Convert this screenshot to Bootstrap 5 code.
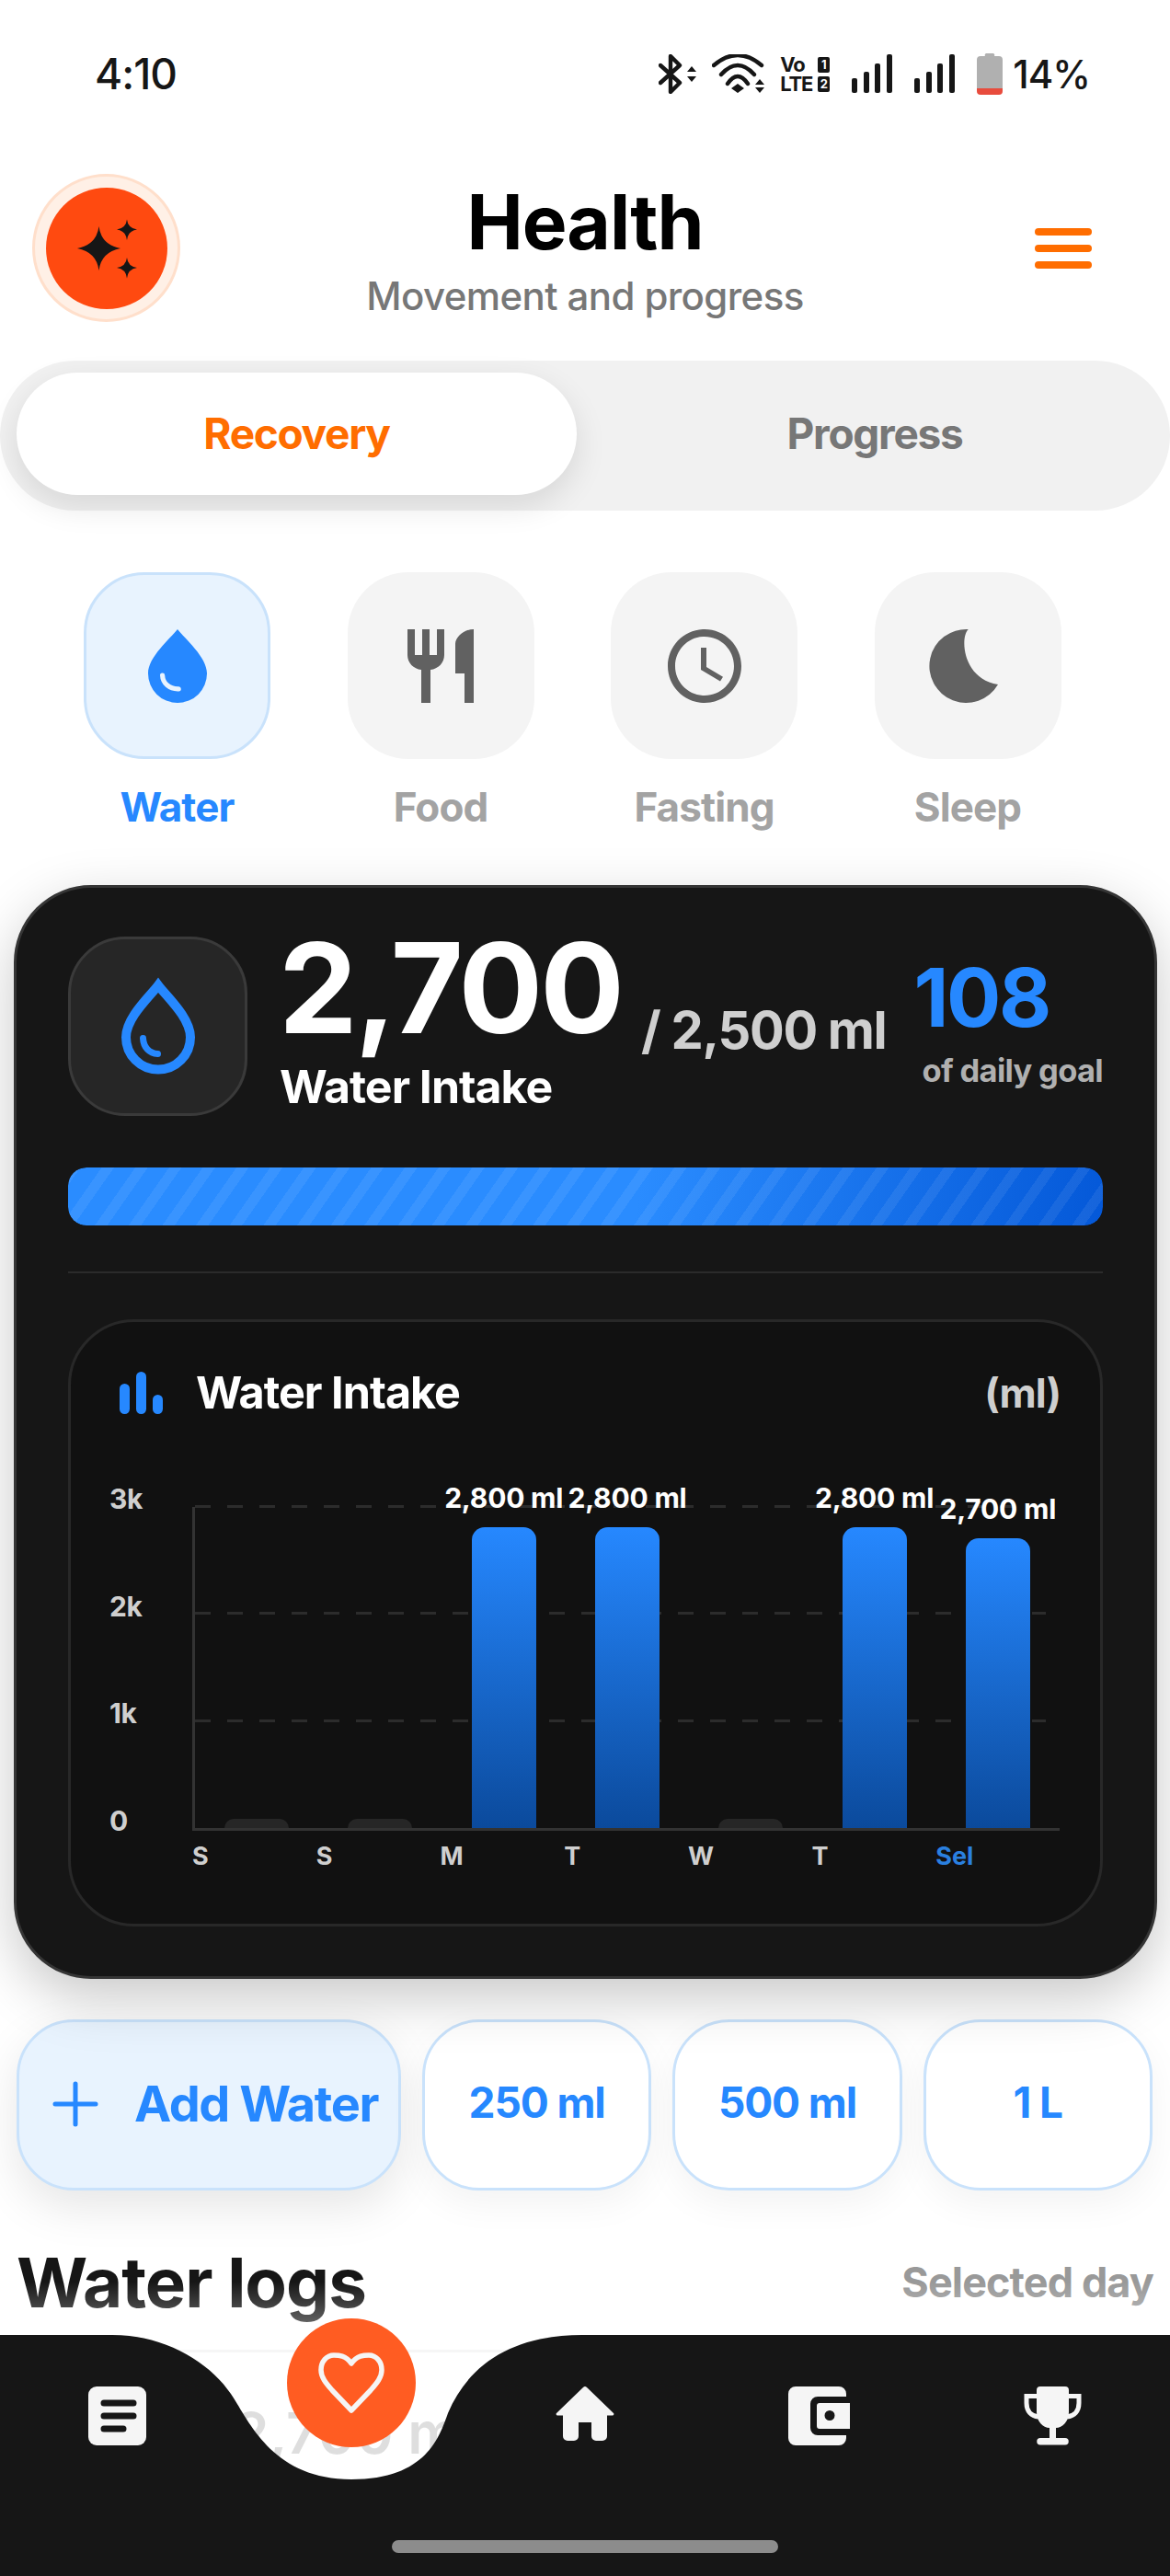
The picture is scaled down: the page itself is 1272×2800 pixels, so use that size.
<!DOCTYPE html>
<html lang="en">
  <head>
    <meta charset="UTF-8" />
    <meta name="viewport" content="width=device-width, initial-scale=1.0" />
    <title>Health</title>
    <link
      href="https://cdn.jsdelivr.net/npm/bootstrap@5.3.0/dist/css/bootstrap.min.css"
      rel="stylesheet"
    />
    <style>
      :root { --blue: #2688ff; --ink: #161616; --orange: #ff6d00; }
      html, body { margin: 0; }
      body { width: 1272px; height: 2800px; overflow: hidden; position: relative; background: #fff; font-family: Inter, "Liberation Sans", sans-serif; color: var(--ink); }

      .status-row { height: 45px; margin-top: 58px; padding: 0 87px 0 103px; }
      .status-time { font-size: 46px; font-weight: 500; line-height: 45px; letter-spacing: -1px; }
      .status-pct { font-size: 42px; font-weight: 500; line-height: 45px; letter-spacing: -1px; margin-left: 11px; }
      .lte-box { width: 54px; line-height: 21px; font-weight: 700; font-size: 22px; letter-spacing: -1.200px; }
      .sim-num { background: var(--ink); color: #fff; border-radius: 2px; width: 13px; height: 17px; font-size: 13px; line-height: 17px; text-align: center; letter-spacing: 0; }

      .top-bar { margin-top: 86px; height: 161px; padding-left: 35px; }
      .logo-ring { width: 161px; height: 161px; border-radius: 50%; background: #fff0e6; border: 3px solid #ffdfcb; }
      .logo-disc { width: 132px; height: 132px; border-radius: 50%; background: #ff4a10; }
      .top-side { width: 161px; }
      .top-side-end { margin-right: 35px; padding-right: 50px; }
      .top-text { padding-top: 10px; }
      .page-title { font-size: 82px; font-weight: 700; line-height: 90px; color: #000; margin: -2px 0 0; letter-spacing: -1px; }
      .page-sub { font-size: 42px; font-weight: 500; line-height: 56px; color: #777; margin: 7px 0 0; letter-spacing: -.6px; }
      .burger { width: 62px; gap: 10px; }
      .burger span { display: block; height: 8px; background: var(--orange); border-radius: 4px; }

      .seg-wrap { margin-top: 42px; height: 163px; background: #f1f1f1; border-radius: 82px; padding: 13px 18px; }
      .seg-item { flex: 1; height: 133px; border-radius: 67px; font-size: 46px; font-weight: 700; color: #777; letter-spacing: -1.300px; }
      .seg-item.is-on { flex: 0 0 609px; background: #fff; color: var(--orange); box-shadow: 0 12px 34px rgba(0,0,0,.11); }
      .seg-rest { padding-left: 21px; }

      .cat-row { margin-top: 67px; padding-left: 91px; gap: 83.500px; }
      .cat-col { width: 203px; }
      .cat-tile { width: 203px; height: 203px; border-radius: 66px; background: #f4f4f4; }
      .cat-tile.is-on { background: #e8f3fe; border: 3px solid #c9e2fb; }
      .cat-label { font-size: 44px; font-weight: 700; line-height: 50px; margin-top: 27px; color: #a3a3a3; letter-spacing: -.9px; }
      .cat-label.is-on { color: var(--blue); }

      .water-card { margin: 60px 14px 0 15px; height: 1189px; background: var(--ink); border: 3px solid #353535; border-radius: 84px; padding: 53px 56px 0; box-shadow: 0 20px 60px rgba(0,0,0,.22); color: #fff; }
      .drop-tile { width: 195px; height: 195px; flex: none; border-radius: 62px; background: #262626; border: 3px solid #3a3a3a; }
      .stat-main { margin-left: 34px; }
      .stat-big { font-size: 136px; font-weight: 700; line-height: 112px; letter-spacing: -3px; color: #fff; }
      .stat-of { font-size: 56px; font-weight: 700; line-height: 70px; color: #cfcfcf; margin: 0 0 -25px 21px; letter-spacing: -1.300px; white-space: nowrap; }
      .stat-name { font-size: 50px; font-weight: 700; line-height: 60px; margin: 21px 0 0 1px; letter-spacing: -1px; }
      .stat-side { margin-left: auto; padding-top: 21px; }
      .stat-pct { font-size: 88px; font-weight: 700; line-height: 90px; color: var(--blue); letter-spacing: -2.500px; margin-left: -4px; }
      .stat-pct-sub { font-size: 34.500px; font-weight: 700; line-height: 44px; color: #b0b0b0; margin-top: 13px; margin-left: 5px; white-space: nowrap; letter-spacing: -.7px; }
      .water-bar { margin-top: 56px; height: 63px; border-radius: 20px; background-color: transparent; }
      .water-fill { width: 100%; border-radius: 20px; background: repeating-linear-gradient(125deg, rgba(255,255,255,.07) 0 11px, rgba(255,255,255,0) 11px 30px), linear-gradient(100deg, #2a8cff 0%, #2a8cff 55%, #0458d8 100%); }
      .card-rule { margin: 50px 0; border: 0; height: 2px; background: #2b2b2b; opacity: 1; }

      .chart-panel { height: 660px; background: #111; border: 3px solid #282828; border-radius: 72px; padding: 47px 43px 0 53px; }
      .chart-head { height: 60px; }
      .chart-title { font-size: 48.500px; font-weight: 700; letter-spacing: -1px; margin-left: 36px; }
      .chart-unit { font-size: 44px; font-weight: 700; color: #cfcfcf; letter-spacing: -1px; }
      .chart-body { margin-top: 94px; margin-left: -11px; }
      .y-col { width: 90px; height: 386px; margin-top: -27px; flex: none; }
      .y-col span { font-size: 30px; font-weight: 700; line-height: 36px; color: #cfcfcf; letter-spacing: -.4px; }
      .plot { position: relative; width: 943px; height: 352px; border-left: 3px solid #333; border-bottom: 3px solid #333; }
      .grid-line { position: absolute; left: 0; width: 925px; height: 3px; background: repeating-linear-gradient(90deg, #2c2c2c 0 17px, transparent 17px 35px); }
      .plot-slot { position: relative; flex: 1 1 0; min-width: 0; height: 100%; }
      .bar-value { flex: none; font-size: 30px; font-weight: 700; line-height: 36px; color: #fff; margin-bottom: 14px; white-space: nowrap; letter-spacing: -.2px; }
      .bar-fill { flex: none; width: 70px; border-radius: 14px 14px 0 0; background: linear-gradient(180deg, #2688ff 0%, #0b4a9c 100%); }
      .bar-empty { flex: none; width: 70px; border-radius: 14px 14px 0 0; background: #262626; }
      .x-row { margin-left: 90px; width: 943px; margin-top: 3px; }
      .x-row span { flex: 1 1 0; font-size: 27px; font-weight: 700; line-height: 36px; color: #cfcfcf; }
      .x-row span.is-on { color: #2a80e0; }

      .quick-row { margin-top: 44px; padding: 0 19px 0 18px; gap: 23px; }
      .quick-btn { height: 186px; flex: 1 1 0; border-radius: 62px; background: #fff; border: 3px solid #c9e2fb; color: var(--blue); font-size: 46px; font-weight: 700; letter-spacing: -1.100px; box-shadow: 0 14px 40px rgba(0,0,0,.05); padding: 0 0 6px; }
      .quick-btn.is-main { flex: 0 0 418px; background: #e8f3fe; font-size: 54px; box-shadow: 0 18px 50px rgba(0,0,0,.1); padding: 0 0 3px 36px; gap: 39px; white-space: nowrap; letter-spacing: -1.400px; }

      .logs-head { margin-top: 55px; padding: 0 18px; height: 90px; }
      .logs-title { font-size: 74.500px; font-weight: 700; line-height: 90px; margin: 0; letter-spacing: -1px; }
      .logs-note { font-size: 45px; font-weight: 700; color: #999; letter-spacing: -.9px; }
      .log-row { margin-top: 28px; border-top: 3px solid #ececec; padding: 48px 0 0 254px; font-size: 62px; font-weight: 600; line-height: 80px; color: var(--ink); }

      .fade-veil { position: absolute; left: 0; right: 0; top: 2480px; height: 200px; background: linear-gradient(180deg, rgba(255,255,255,0) 0%, rgba(255,255,255,.86) 60%, rgba(255,255,255,.86) 100%); }
      .tab-bar { position: absolute; left: 0; right: 0; bottom: 0; height: 262px; }
      .tab-shape { position: absolute; left: 0; top: 0; }
      .tab-items { position: relative; padding-top: 56px; }
      .tab-cell { flex: 1 1 0; }
      .tab-fab { width: 140px; height: 140px; border-radius: 50%; background: #ff5c22; margin-top: -74px; }
      .home-pill { position: absolute; left: 426px; bottom: 25px; width: 420px; height: 14px; border-radius: 7px; background: #8c8c8c; }
    </style>
  </head>
  <body>
    <div class="status-row d-flex align-items-center justify-content-between">
      <div class="status-time">4:10</div>
      <div class="d-flex align-items-center">
        <svg width="42" height="43" viewBox="0 0 42 43" fill="none" stroke="#161616" stroke-width="4.400" stroke-linejoin="round" stroke-linecap="round"><path d="M2 12l21 19-10 10V2l10 10L2 31"/><path d="M36 13l5 6H31zM31 24h10l-5 6z" fill="#161616" stroke="none"/></svg>
        <svg class="ms-3" width="58" height="43" viewBox="0 0 58 43" fill="none" stroke="#161616" stroke-width="4.400" stroke-linecap="round"><path d="M2 12Q28-10 54 12M10 22Q28 2 46 22M17 32Q28 16 39 32"/><path d="M28 32l7 5-7 5-7-5zM52 27l5 6H47zM47 36h10l-5 6z" fill="#161616" stroke="none"/></svg>
        <div class="lte-box ms-3">
          <div class="d-flex justify-content-between align-items-center"><span>Vo</span><span class="sim-num">1</span></div>
          <div class="d-flex justify-content-between align-items-center"><span>LTE</span><span class="sim-num">2</span></div>
        </div>
        <svg class="ms-4" width="44" height="43" viewBox="0 0 44 43" fill="#161616"><rect x="0" y="26" width="6" height="16" rx="2"/><rect x="13" y="19" width="6" height="23" rx="2"/><rect x="25" y="10" width="6" height="32" rx="2"/><rect x="38" y="0" width="6" height="42" rx="2"/></svg>
        <svg class="ms-4" width="44" height="43" viewBox="0 0 44 43" fill="#161616"><rect x="0" y="26" width="6" height="16" rx="2"/><rect x="13" y="19" width="6" height="23" rx="2"/><rect x="25" y="10" width="6" height="32" rx="2"/><rect x="38" y="0" width="6" height="42" rx="2"/></svg>
        <svg class="ms-4" width="28" height="45" viewBox="0 0 28 45"><path d="M9 3a2 2 0 0 1 2-3h6a2 2 0 0 1 2 3h5a4 4 0 0 1 4 4v31H0V7a4 4 0 0 1 4-4z" fill="#b0b0b0"/><path d="M0 38h28v3a4 4 0 0 1-4 4H4a4 4 0 0 1-4-4z" fill="#e84c3d"/></svg>
        <div class="status-pct">14%</div>
      </div>
    </div>

    <div class="top-bar d-flex align-items-center justify-content-between">
      <div class="top-side">
        <div class="logo-ring d-flex align-items-center justify-content-center">
          <div class="logo-disc d-flex">
            <svg width="132" height="132" viewBox="0 0 132 132" fill="#161616"><path d="M57.500 42Q60 62 81 66 60 70 57.500 90 55 70 34 66 55 62 57.500 42z"/><path d="M88 34.500Q89 44 99 45.500 89 47 88 57 87 47 77 45.500 87 44 88 34.500z"/><path d="M88 76Q89 85.500 99 87 89 88.500 88 98.500 87 88.500 77 87 87 85.500 88 76z"/></svg>
          </div>
        </div>
      </div>
      <div class="top-text text-center">
        <h1 class="page-title">Health</h1>
        <p class="page-sub">Movement and progress</p>
      </div>
      <div class="top-side top-side-end d-flex justify-content-end">
        <div class="burger d-flex flex-column"><span></span><span></span><span></span></div>
      </div>
    </div>

    <div class="seg-wrap d-flex">
      <div class="seg-item is-on d-flex align-items-center justify-content-center">Recovery</div>
      <div class="seg-item seg-rest d-flex align-items-center justify-content-center">Progress</div>
    </div>

    <div class="cat-row d-flex">
      <div class="cat-col text-center">
        <div class="cat-tile is-on d-flex align-items-center justify-content-center">
          <svg width="96" height="96" viewBox="0 0 24 24"><path d="M12 2C10 4.600 4 9.500 4 14a8 8 0 0 0 16 0c0-4.500-6-9.400-8-12z" fill="#2688ff"/><path d="M7.900 14.500c.1 2.200 1.900 3.800 4.400 3.700" fill="none" stroke="#e8f3fe" stroke-width="1.300" stroke-linecap="round"/></svg>
        </div>
        <div class="cat-label is-on">Water</div>
      </div>
      <div class="cat-col text-center">
        <div class="cat-tile d-flex align-items-center justify-content-center">
          <svg width="96" height="96" viewBox="0 0 24 24" fill="#616161"><path d="M11 9H9V2H7v7H5V2H3v7c0 2.120 1.660 3.840 3.750 3.970V22h2.500v-9.030C11.340 12.840 13 11.120 13 9V2h-2v7zm5-3v8h2.500v8H21V2c-2.760 0-5 2.240-5 4z"/></svg>
        </div>
        <div class="cat-label">Food</div>
      </div>
      <div class="cat-col text-center">
        <div class="cat-tile d-flex align-items-center justify-content-center">
          <svg width="96" height="96" viewBox="0 0 24 24" fill="#616161"><path d="M11.990 2C6.470 2 2 6.480 2 12s4.470 10 9.990 10C17.520 22 22 17.520 22 12S17.520 2 11.990 2zM12 20c-4.420 0-8-3.580-8-8s3.580-8 8-8 8 3.580 8 8-3.580 8-8 8z"/><path d="M12.500 7H11v6l5.250 3.150.75-1.230-4.500-2.670z"/></svg>
        </div>
        <div class="cat-label">Fasting</div>
      </div>
      <div class="cat-col text-center">
        <div class="cat-tile d-flex align-items-center justify-content-center">
          <svg width="96" height="96" viewBox="0 0 24 24" fill="#616161"><path d="M12.200 2C9.900 4 10.500 15.500 20.250 17A10 10 0 1 1 12.200 2z"/></svg>
        </div>
        <div class="cat-label">Sleep</div>
      </div>
    </div>

    <div class="water-card card">
      <div class="d-flex">
        <div class="drop-tile d-flex align-items-center justify-content-center">
          <svg width="120" height="120" viewBox="0 0 24 24" fill="none" stroke="#2688ff" stroke-linecap="round"><path d="M12 3C10.300 5.300 5 10 5 14.300a7 7 0 0 0 14 0C19 10 13.700 5.300 12 3z" stroke-width="2"/><path d="M8.700 14.500c.1 1.900 1.300 3.300 3.200 3.400" stroke-width="1.400"/></svg>
        </div>
        <div class="stat-main">
          <div class="d-flex align-items-end">
            <div class="stat-big">2,700</div>
            <div class="stat-of">/ 2,500 ml</div>
          </div>
          <div class="stat-name">Water Intake</div>
        </div>
        <div class="stat-side">
          <div class="stat-pct">108</div>
          <div class="stat-pct-sub">of daily goal</div>
        </div>
      </div>

      <div class="progress water-bar">
        <div class="progress-bar water-fill" role="progressbar"></div>
      </div>
      <hr class="card-rule" />

      <div class="chart-panel">
        <div class="chart-head d-flex align-items-center justify-content-between">
          <div class="d-flex align-items-center">
            <svg width="47" height="46" viewBox="0 0 47 46" fill="#2688ff"><rect x="0" y="13" width="11" height="33" rx="5.500"/><rect x="18" y="0" width="11" height="46" rx="5.500"/><rect x="36" y="25" width="11" height="21" rx="5.500"/></svg>
            <div class="chart-title">Water Intake</div>
          </div>
          <div class="chart-unit">(ml)</div>
        </div>
        <div class="chart-body">
          <div class="d-flex">
            <div class="y-col d-flex flex-column justify-content-between">
              <span>3k</span><span>2k</span><span>1k</span><span>0</span>
            </div>
            <div class="plot d-flex">
              <div class="grid-line" style="top: -2px"></div>
              <div class="grid-line" style="top: 114px"></div>
              <div class="grid-line" style="top: 231px"></div>
              <div class="plot-slot d-flex flex-column justify-content-end align-items-center"><div class="bar-empty" style="height: 10px"></div></div>
              <div class="plot-slot d-flex flex-column justify-content-end align-items-center"><div class="bar-empty" style="height: 10px"></div></div>
              <div class="plot-slot d-flex flex-column justify-content-end align-items-center"><div class="bar-value">2,800 ml</div><div class="bar-fill" style="height: 327px"></div></div>
              <div class="plot-slot d-flex flex-column justify-content-end align-items-center"><div class="bar-value">2,800 ml</div><div class="bar-fill" style="height: 327px"></div></div>
              <div class="plot-slot d-flex flex-column justify-content-end align-items-center"><div class="bar-empty" style="height: 10px"></div></div>
              <div class="plot-slot d-flex flex-column justify-content-end align-items-center"><div class="bar-value">2,800 ml</div><div class="bar-fill" style="height: 327px"></div></div>
              <div class="plot-slot d-flex flex-column justify-content-end align-items-center"><div class="bar-value">2,700 ml</div><div class="bar-fill" style="height: 315px"></div></div>
            </div>
          </div>
          <div class="x-row d-flex">
            <span>S</span><span>S</span><span>M</span><span>T</span><span>W</span><span>T</span><span class="is-on">Sel</span>
          </div>
        </div>
      </div>
    </div>

    <div class="quick-row d-flex">
      <button type="button" class="btn quick-btn is-main d-flex align-items-center justify-content-start">
        <svg width="50" height="50" viewBox="0 0 50 50" stroke="#2688ff" stroke-width="5" stroke-linecap="round"><path d="M25 3v44M3 25h44"/></svg>
        <span>Add Water</span>
      </button>
      <button type="button" class="btn quick-btn">250 ml</button>
      <button type="button" class="btn quick-btn">500 ml</button>
      <button type="button" class="btn quick-btn">1 L</button>
    </div>

    <div class="logs-head d-flex align-items-center justify-content-between">
      <h2 class="logs-title">Water logs</h2>
      <div class="logs-note">Selected day</div>
    </div>
    <div class="log-row">2,700 ml</div>

    <div class="fade-veil"></div>

    <div class="tab-bar">
      <svg class="tab-shape" width="1272" height="262" viewBox="0 0 1272 262" fill="#161616"><path d="M0 0H122C180 0 228 30 251 64 270 92 295 157 382 157 464 157 478 110 487 85 510 30 560 0 633 0H1272V262H0z"/></svg>
      <div class="tab-items d-flex">
        <div class="tab-cell d-flex justify-content-center">
          <svg width="63" height="64" viewBox="0 0 63 64"><rect width="63" height="64" rx="9" fill="#f5f5f5"/><path d="M17 18h32M17 32h32M17 46h21" stroke="#161616" stroke-width="7" stroke-linecap="round"/></svg>
        </div>
        <div class="tab-cell d-flex justify-content-center">
          <div class="tab-fab d-flex align-items-center justify-content-center">
            <svg width="72" height="66" viewBox="0 0 72 66" fill="none" stroke="#f5f5f5" stroke-width="5.500" stroke-linejoin="round"><path d="M36 12C30 3 22 3 17 3 9 3 3 10 3 19c0 8 5 14 12 22l21 22 21-22c7-8 12-14 12-22 0-9-6-16-14-16-5 0-13 0-19 9z"/></svg>
          </div>
        </div>
        <div class="tab-cell d-flex justify-content-center">
          <svg width="64" height="60" viewBox="0 0 64 60" fill="#f5f5f5"><path d="M30 1a3 3 0 0 1 4 0l29 28a1.500 1.500 0 0 1-1 2.500h-6V54a5 5 0 0 1-5 5h-7a5 5 0 0 1-5-5V39H25v15a5 5 0 0 1-5 5h-7a5 5 0 0 1-5-5V31.500H2A1.500 1.500 0 0 1 1 29z"/></svg>
        </div>
        <div class="tab-cell d-flex justify-content-center">
          <svg width="67" height="64" viewBox="0 0 67 64" fill="#f5f5f5"><path d="M8 0H55a8 8 0 0 1 8 8V11H32a8 8 0 0 0-8 8V45a8 8 0 0 0 8 8H63v3a8 8 0 0 1-8 8H8a8 8 0 0 1-8-8V8a8 8 0 0 1 8-8z"/><path fill-rule="evenodd" d="M34 18H67V46H34a3 3 0 0 1-3-3V21a3 3 0 0 1 3-3zM45 26a5.500 5.500 0 1 0 0 11 5.500 5.500 0 0 0 0-11z"/></svg>
        </div>
        <div class="tab-cell d-flex justify-content-center">
          <svg width="63" height="64" viewBox="0 0 63 64" fill="#f5f5f5"><path d="M18 0H45a4 4 0 0 1 4 4V28C49 38 42 45 35 45V56H45a3.500 3.500 0 0 1 0 7.500H18a3.500 3.500 0 0 1 0-7.500H28V45C21 45 14 38 14 28V4a4 4 0 0 1 4-4z"/><path d="M15 10.500H3V18C3 27 8 32 16 33M48 10.500H60V18C60 27 55 32 47 33" fill="none" stroke="#f5f5f5" stroke-width="5"/></svg>
        </div>
      </div>
      <div class="home-pill"></div>
    </div>

    <script src="https://cdn.jsdelivr.net/npm/bootstrap@5.3.0/dist/js/bootstrap.bundle.min.js"></script>
  </body>
</html>
